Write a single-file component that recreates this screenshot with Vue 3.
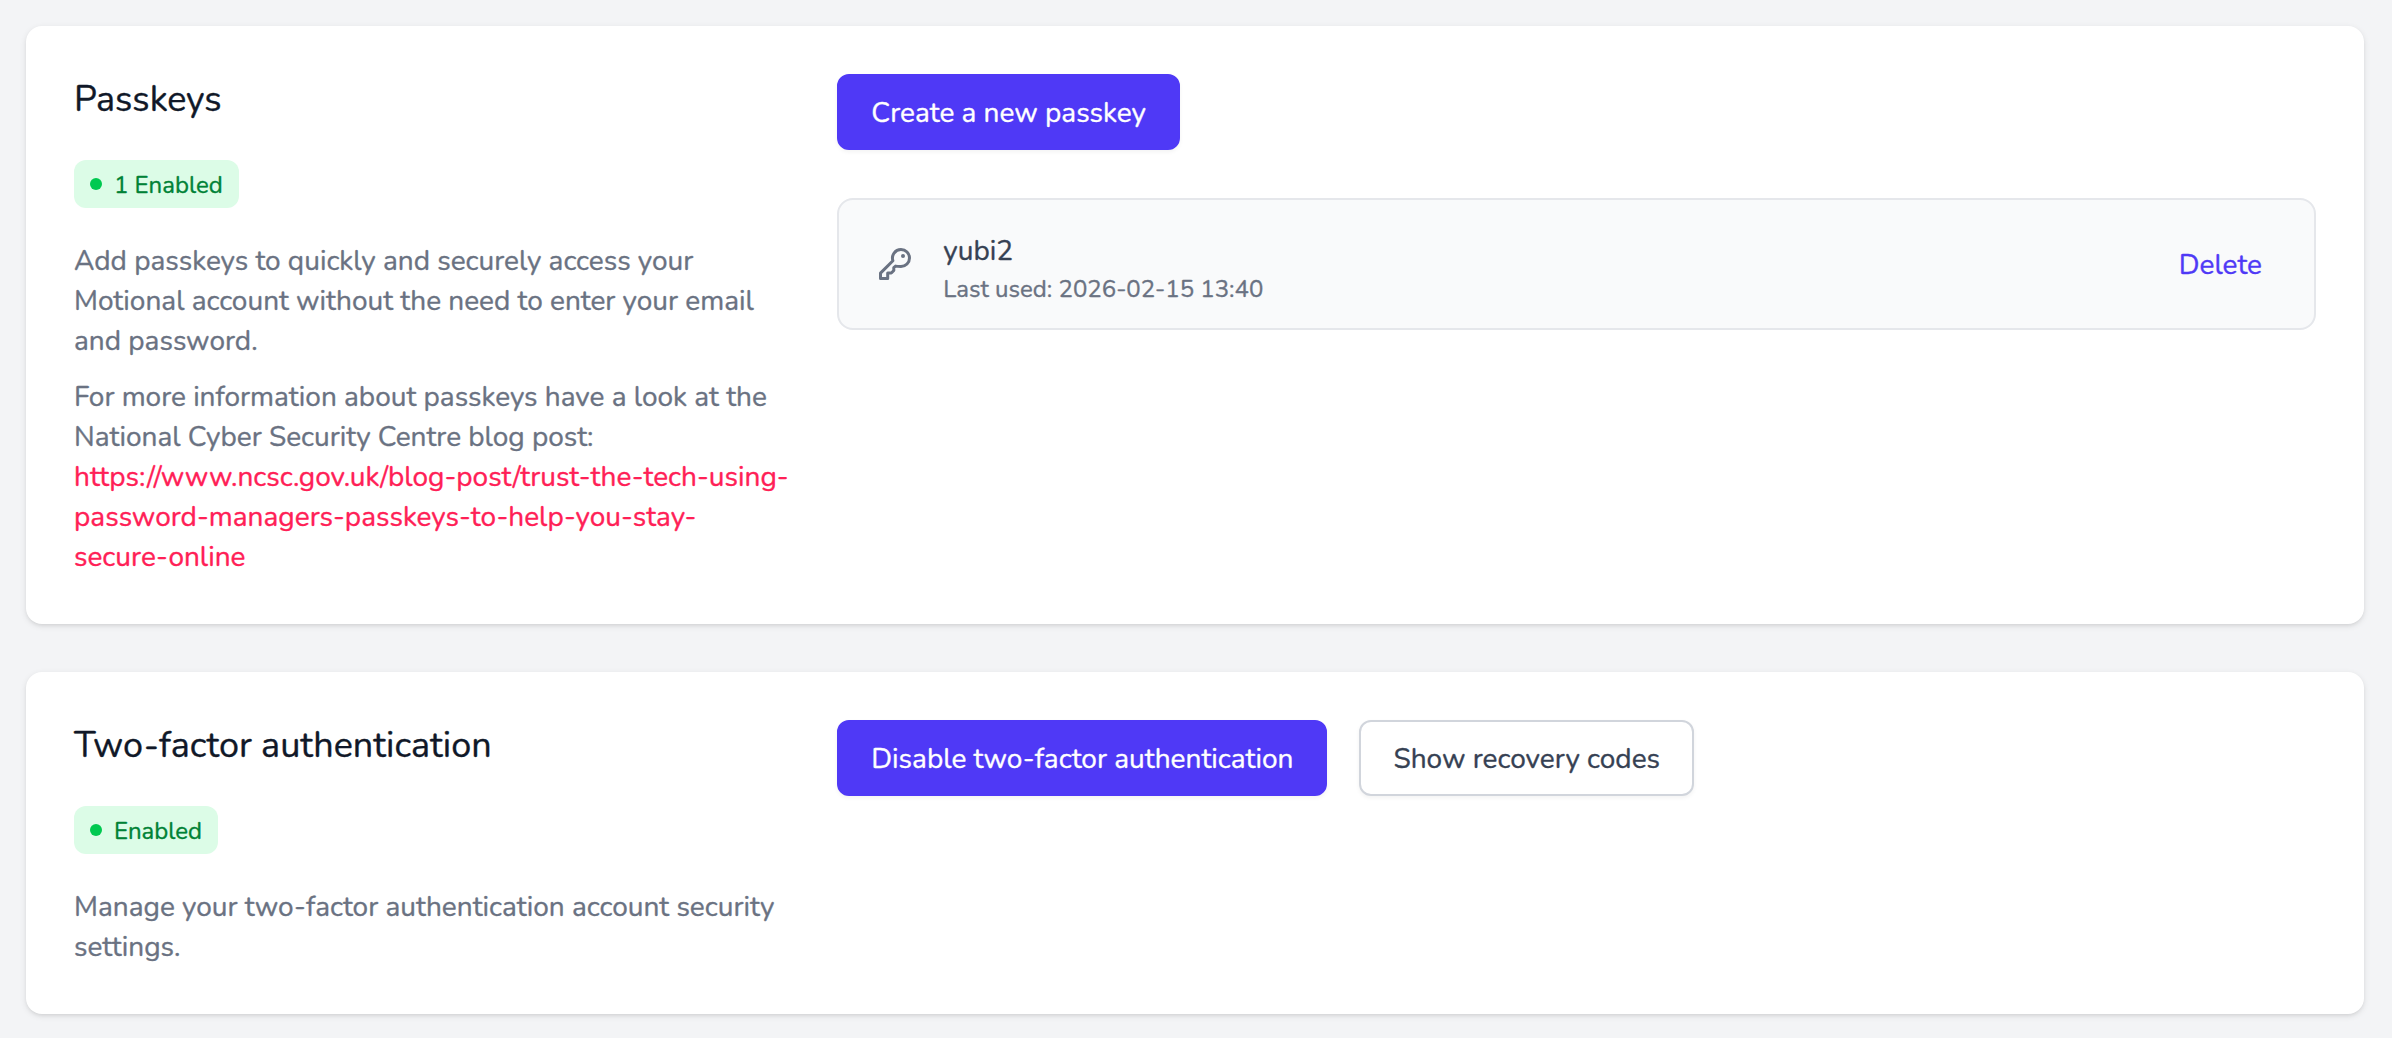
<script setup>
import { ref } from "vue";

const passkeys = ref([
  { name: 'yubi2', lastUsed: '2026-02-15 13:40' }
]);
const blogUrl = 'https://www.ncsc.gov.uk/blog-post/trust-the-tech-using-password-managers-passkeys-to-help-you-stay-secure-online';

const removePasskey = (index) => {
  passkeys.value.splice(index, 1);
}
</script>

<template>
  <main class="page">
    <section class="card">
      <div class="info">
        <h2 class="title">Passkeys</h2>
        <span class="badge"><i class="dot"></i><span>{{ passkeys.length }} Enabled</span></span>
        <div class="description">
          <p>Add passkeys to quickly and securely access your Motional account without the need to enter your email and password.</p>
          <p>
            For more information about passkeys have a look at the National Cyber Security Centre blog post:
            <a class="link" :href="blogUrl">{{ blogUrl }}</a>
          </p>
        </div>
      </div>
      <div class="content">
        <div class="actions">
          <button class="btn btn-primary">Create a new passkey</button>
        </div>
        <ul class="passkeys">
          <li v-for="(passkey, index) in passkeys" :key="passkey.name" class="passkey">
            <svg class="key-icon" viewBox="0 0 32 32" fill="none">
              <path d="M22 1.5a8.5 8.5 0 0 0-8.1 11.2L1.5 25.1v5.4h7.2V25h3.6l2.5-2.5v-2.8l1.8-1.6c1.6.4 3.4.4 5.4.4A8.5 8.5 0 0 0 22 1.5z" stroke="currentColor" stroke-width="3" stroke-linejoin="round" />
              <circle cx="24" cy="8" r="2" fill="currentColor" />
            </svg>
            <div class="passkey-text">
              <span class="passkey-name">{{ passkey.name }}</span>
              <span class="passkey-used">Last used: {{ passkey.lastUsed }}</span>
            </div>
            <button class="delete" @click="removePasskey(index)">Delete</button>
          </li>
        </ul>
      </div>
    </section>

    <section class="card">
      <div class="info">
        <h2 class="title">Two-factor authentication</h2>
        <span class="badge"><i class="dot"></i><span>Enabled</span></span>
        <div class="description">
          <p>Manage your two-factor authentication account security settings.</p>
        </div>
      </div>
      <div class="content">
        <div class="actions">
          <button class="btn btn-primary">Disable two-factor authentication</button>
          <button class="btn btn-secondary">Show recovery codes</button>
        </div>
      </div>
    </section>
  </main>
</template>

<style>
body {
  background: #f3f4f6;
}
</style>

<style scoped>
* {
  box-sizing: border-box;
}
.page {
  display: flex;
  flex-direction: column;
  gap: 48px;
  padding: 26px 28px 24px 26px;
  font-family: Nunito, Lato, sans-serif;
  font-size: 28px;
  line-height: 40px;
  -webkit-text-stroke: 0.35px currentColor;
}
.card {
  display: grid;
  grid-template-columns: repeat(3, minmax(0, 1fr));
  gap: 48px;
  padding: 48px;
  background: #fff;
  border-radius: 16px;
  box-shadow: 0 2px 6px rgba(0, 0, 0, 0.1), 0 2px 4px -2px rgba(0, 0, 0, 0.1);
}
.content {
  grid-column: span 2;
}
.title {
  margin: 0 0 34px;
  color: #101828;
  font-size: 36px;
  font-weight: 400;
  line-height: 52px;
}
.badge {
  display: flex;
  align-items: center;
  gap: 12px;
  width: fit-content;
  height: 48px;
  padding: 0 16px;
  border-radius: 12px;
  background: #dcfce7;
  color: #008236;
  font-size: 24px;
  line-height: 32px;
}
.badge span {
  padding-top: 2px;
}
.dot {
  width: 12px;
  height: 12px;
  border-radius: 50%;
  background: #00c950;
}
.description {
  margin: 33px 0 -1px;
  color: #6a7282;
}
.description p {
  margin: 0 0 16px;
}
.description p:last-child {
  margin-bottom: 0;
}
.link {
  color: #ff2056;
  text-decoration: none;
}
.actions {
  display: flex;
  gap: 32px;
}
.btn {
  height: 76px;
  padding: 2px 32px 0;
  border: 2px solid transparent;
  border-radius: 12px;
  font: inherit;
  white-space: nowrap;
  box-shadow: 0 2px 4px rgba(0, 0, 0, 0.05);
}
.btn-primary {
  background: #4f39f6;
  border-color: #4f39f6;
  color: #fff;
}
.btn-secondary {
  background: #fff;
  border-color: #d1d5dc;
  color: #364153;
}
.passkeys {
  margin: 48px 0 0;
  padding: 0;
  list-style: none;
}
.passkey {
  display: flex;
  align-items: center;
  height: 132px;
  padding: 0 52px 0 40px;
  border: 2px solid #e5e7eb;
  border-radius: 16px;
  background: #f9fafb;
}
.key-icon {
  width: 32px;
  height: 32px;
  color: #6a7282;
}
.passkey-text {
  display: flex;
  flex-direction: column;
  flex: 1;
  margin-left: 32px;
  padding-top: 9px;
}
.passkey-name {
  color: #364153;
}
.passkey-used {
  color: #6a7282;
  font-size: 24px;
  line-height: 36px;
}
.delete {
  padding: 2px 0 0;
  border: 0;
  background: none;
  color: #4f39f6;
  font: inherit;
}
</style>
